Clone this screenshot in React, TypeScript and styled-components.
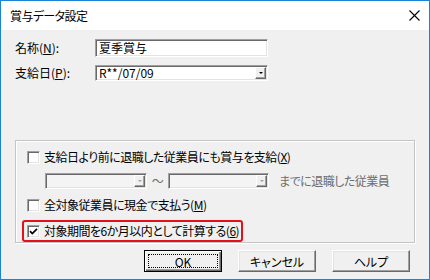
import styled, { createGlobalStyle } from 'styled-components';

const GlobalStyle = createGlobalStyle`
  html, body {
    margin: 0;
    padding: 0;
    background: #fff;
    overflow: hidden;
  }
  body {
    font-family: "Noto Sans CJK JP", "Noto Sans", sans-serif;
    font-size: 12px;
  }
`;

const Window = styled.div`
  width: 430px;
  height: 280px;
  box-sizing: border-box;
  border: 1px solid #1883d7;
  display: flex;
  flex-direction: column;
  background: #f0f0f0;
  color: #000;
  font-feature-settings: "palt";
`;

const TitleBar = styled.div`
  height: 29px;
  flex-shrink: 0;
  background: #fff;
  display: flex;
  align-items: center;
  justify-content: space-between;
  padding: 0 9px;
  font-size: 12px;
  letter-spacing: -0.6px;
`;

const Body = styled.div`
  flex: 1;
  padding: 9px 14px 0 14px;
  display: flex;
  flex-direction: column;
`;

const FieldRow = styled.div<{ $gap?: number }>`
  display: flex;
  align-items: center;
  margin-top: ${({ $gap }) => $gap ?? 0}px;
`;

const FieldLabel = styled.span`
  width: 80px;
  flex-shrink: 0;
  line-height: 14px;
`;

const TextBox = styled.div<{ $width: number; $height: number }>`
  width: ${({ $width }) => $width}px;
  height: ${({ $height }) => $height}px;
  box-sizing: border-box;
  background: #fff;
  border: 1px solid;
  border-color: #a0a0a0 #fff #fff #a0a0a0;
  box-shadow: inset 1px 1px #696969, inset -1px -1px #e3e3e3;
  padding: 0 0 0 3px;
  display: flex;
  align-items: center;
  font-size: 12px;
  line-height: 14px;
`;

const Combo = styled.div<{ $width: number; $disabled?: boolean }>`
  width: ${({ $width }) => $width}px;
  height: 16px;
  box-sizing: border-box;
  background: ${({ $disabled }) => ($disabled ? '#f4f4f4' : '#fff')};
  border: 1px solid;
  border-color: #a0a0a0 #fff #fff #a0a0a0;
  box-shadow: inset 1px 1px #696969, inset -1px -1px #e3e3e3;
  padding: 1px 1px 1px 3px;
  display: flex;
  align-items: stretch;
  justify-content: space-between;
  font-size: 12px;
  line-height: 12px;
`;

const ComboText = styled.span`
  display: flex;
  align-items: center;
`;

const DropButton = styled.span<{ $disabled?: boolean }>`
  width: 11px;
  box-sizing: border-box;
  background: #f0f0f0;
  border: 1px solid;
  border-color: #fff #696969 #696969 #fff;
  box-shadow: inset -1px -1px #a0a0a0;
  display: flex;
  align-items: center;
  justify-content: center;

  &::after {
    content: '';
    width: 0;
    height: 0;
    border-left: 2px solid transparent;
    border-right: 2px solid transparent;
    border-top: 2px solid ${({ $disabled }) => ($disabled ? '#a0a0a0' : '#000')};
  }
`;

const GroupBox = styled.div`
  margin-top: 59px;
  width: 400px;
  height: 103px;
  box-sizing: border-box;
  border: 1px solid #c4c4c4;
  box-shadow: inset 1px 1px #fff, 1px 1px #fff;
  padding: 8px 0 0 11px;
  display: flex;
  flex-direction: column;
  align-items: flex-start;
  letter-spacing: -0.5px;
`;

const CheckRow = styled.div<{ $gap?: number }>`
  display: flex;
  align-items: center;
  height: 16px;
  gap: 4px;
  margin-top: ${({ $gap }) => $gap ?? 0}px;
  line-height: 14px;
`;

const Highlight = styled.div`
  margin: 7px 0 0 -5px;
  padding: 1px 2px 1px 3px;
  border: 2px solid #e4101a;
  border-radius: 3px;
`;

const CheckBox = styled.span`
  width: 13px;
  height: 13px;
  box-sizing: border-box;
  background: #fff;
  border: 1px solid;
  border-color: #a0a0a0 #fff #fff #a0a0a0;
  box-shadow: inset 1px 1px #696969, inset -1px -1px #e3e3e3;
  display: flex;
  align-items: center;
  justify-content: center;
  flex-shrink: 0;
`;

const RangeRow = styled.div`
  display: flex;
  align-items: center;
  margin: 7px 0 0 18px;
  color: #6d6d6d;
`;

const Tilde = styled.span`
  width: 21px;
  text-align: center;
`;

const DisabledText = styled.span`
  margin-left: 10px;
`;

const ButtonRow = styled.div`
  display: flex;
  justify-content: flex-end;
  gap: 16px;
  margin: 7px 5px 0 0;
`;

const Button = styled.div<{ $default?: boolean }>`
  width: 78px;
  height: 22px;
  box-sizing: border-box;
  background: #f0f0f0;
  display: flex;
  align-items: stretch;
  justify-content: center;
  font-size: 12px;
  border: 1px solid;
  border-color: ${({ $default }) => ($default ? '#000' : '#fff #696969 #696969 #fff')};
  box-shadow: ${({ $default }) =>
    $default
      ? 'inset 1px 1px #fff, inset -1px -1px #696969, inset -2px -2px #a0a0a0'
      : 'inset -1px -1px #a0a0a0, inset 1px 1px #e3e3e3'};
  padding: ${({ $default }) => ($default ? '3px' : '0')};
`;

const ButtonFace = styled.span<{ $focus?: boolean }>`
  flex: 1;
  display: flex;
  align-items: center;
  justify-content: center;
  border: 1px dotted ${({ $focus }) => ($focus ? '#000' : 'transparent')};
`;

const Key = styled.u`
  text-decoration: underline;
  text-underline-offset: 1px;
`;

function CloseIcon() {
  return (
    <svg width="11" height="11" viewBox="0 0 11 11">
      <path d="M0.5 0.5 L10.5 10.5 M10.5 0.5 L0.5 10.5" stroke="#000" strokeWidth="1.1" fill="none" />
    </svg>
  );
}

function Check({ checked }: { checked?: boolean }) {
  return (
    <CheckBox>
      {checked && (
        <svg width="9" height="9" viewBox="0 0 9 9">
          <path d="M1 4.2 L3.3 6.5 L8 1.8" stroke="#000" strokeWidth="1.7" fill="none" />
        </svg>
      )}
    </CheckBox>
  );
}

export default function App() {
  return (
    <>
      <GlobalStyle />
      <Window>
        <TitleBar>
          <span>賞与データ設定</span>
          <CloseIcon />
        </TitleBar>
        <Body>
          <FieldRow>
            <FieldLabel>
              名称(<Key>N</Key>):
            </FieldLabel>
            <TextBox $width={173} $height={18}>夏季賞与</TextBox>
          </FieldRow>
          <FieldRow $gap={8}>
            <FieldLabel>
              支給日(<Key>P</Key>):
            </FieldLabel>
            <Combo $width={173}>
              <ComboText>R**/07/09</ComboText>
              <DropButton />
            </Combo>
          </FieldRow>

          <GroupBox>
            <CheckRow>
              <Check />
              <span>
                支給日より前に退職した従業員にも賞与を支給(<Key>X</Key>)
              </span>
            </CheckRow>
            <RangeRow>
              <Combo $width={102} $disabled>
                <ComboText />
                <DropButton $disabled />
              </Combo>
              <Tilde>～</Tilde>
              <Combo $width={101} $disabled>
                <ComboText />
                <DropButton $disabled />
              </Combo>
              <DisabledText>までに退職した従業員</DisabledText>
            </RangeRow>
            <CheckRow $gap={8}>
              <Check />
              <span>
                全対象従業員に現金で支払う(<Key>M</Key>)
              </span>
            </CheckRow>
            <Highlight>
              <CheckRow>
                <Check checked />
                <span>
                  対象期間を6か月以内として計算する(<Key>6</Key>)
                </span>
              </CheckRow>
            </Highlight>
          </GroupBox>

          <ButtonRow>
            <Button $default>
              <ButtonFace $focus>OK</ButtonFace>
            </Button>
            <Button>
              <ButtonFace>キャンセル</ButtonFace>
            </Button>
            <Button>
              <ButtonFace>ヘルプ</ButtonFace>
            </Button>
          </ButtonRow>
        </Body>
      </Window>
    </>
  );
}
